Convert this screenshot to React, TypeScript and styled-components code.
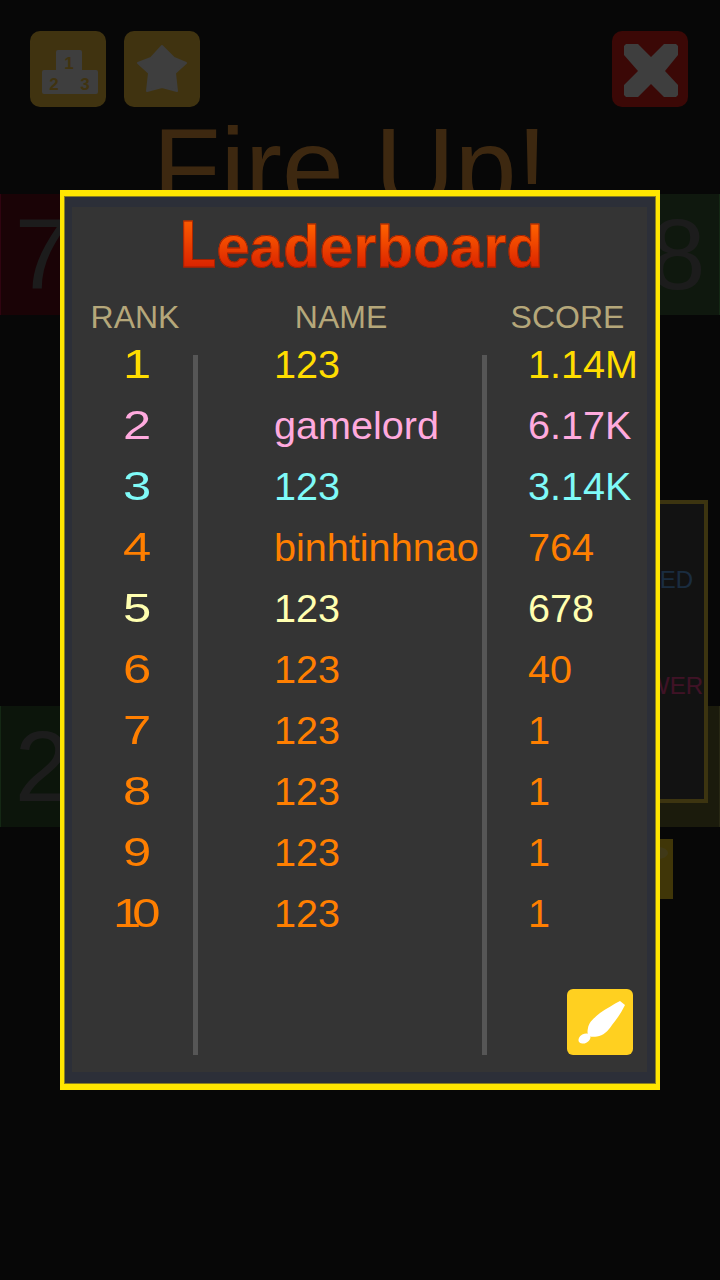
import styled, { createGlobalStyle } from 'styled-components'

const SANS = '"Liberation Sans", Arial, sans-serif'

const PLAYERS = [
  { rank: 1, name: '123', score: '1.14M', color: '#ffdd00' },
  { rank: 2, name: 'gamelord', score: '6.17K', color: '#ffaade' },
  { rank: 3, name: '123', score: '3.14K', color: '#7ffaf8' },
  { rank: 4, name: 'binhtinhnao', score: '764', color: '#ff7f00' },
  { rank: 5, name: '123', score: '678', color: '#ffffb0' },
  { rank: 6, name: '123', score: '40', color: '#ff7f00' },
  { rank: 7, name: '123', score: '1', color: '#ff7f00' },
  { rank: 8, name: '123', score: '1', color: '#ff7f00' },
  { rank: 9, name: '123', score: '1', color: '#ff7f00' },
  { rank: 10, name: '123', score: '1', color: '#ff7f00' },
]

const App = () => {
  return (
    <>
      <GlobalStyle />
      <Game>
        <TopBar>
          <IconButton $bg="#fdcb40">
            <svg width="76" height="76" viewBox="0 0 76 76">
              <path d="M28 19h22a2 2 0 0 1 2 2v18h14a2 2 0 0 1 2 2v20a2 2 0 0 1-2 2H14a2 2 0 0 1-2-2V41a2 2 0 0 1 2-2h12V21a2 2 0 0 1 2-2z" fill="#f5f5f5" />
              <PodiumText x="39" y="38" fontSize="17">1</PodiumText>
              <PodiumText x="24" y="59" fontSize="17">2</PodiumText>
              <PodiumText x="55" y="59" fontSize="17">3</PodiumText>
            </svg>
          </IconButton>
          <IconButton $bg="#fdcb40">
            <svg width="76" height="76" viewBox="0 0 76 76">
              <path
                d="M38 15 50 27 62 32 51 42 53 60 38 56 23 60 25 42 14 32 27 27Z"
                fill="#f5f5f5"
                stroke="#f5f5f5"
                strokeWidth="2"
                strokeLinejoin="round"
              />
            </svg>
          </IconButton>
          <IconButton $bg="#ea2018" $push>
            <svg width="76" height="76" viewBox="0 0 76 76">
              <path
                d="M14 13H26L39 26 52 13H64L66 15V24L53 40 66 54V64L64 66H52L39 53 26 66H14L12 64V54L26 40 12 24V15Z"
                fill="#f5f5f5"
              />
            </svg>
          </IconButton>
        </TopBar>
        <GameTitle>Fire Up!</GameTitle>
        <TileRow>
          <Tile $bg="#680c18" $edge="#c01040" $side="left">7</Tile>
          <Tile $bg="#3c6038" $edge="#50a050" $side="right">8</Tile>
        </TileRow>
        <Middle>
          <SidePanel>
            <PanelLabel $color="#68b0fc" $mr={11}>SPEED</PanelLabel>
            <PanelLabel $color="#ff4898" $mr={1}>POWER</PanelLabel>
          </SidePanel>
        </Middle>
        <TileRow>
          <Tile $bg="#30542c" $edge="#50a050" $side="left">2</Tile>
          <Tile $bg="#6c6c30" $edge="#a0a050" $side="right" />
        </TileRow>
        <BottomRow>
          <PlayButton />
        </BottomRow>
      </Game>
      <Backdrop />
      <ModalLayer>
        <Modal>
          <Content>
            <TitleRow>
              <BoardTitle>
                <TitleInitial>L</TitleInitial>eaderboard
              </BoardTitle>
            </TitleRow>
            <HeaderRow>
              <HeaderCell $pl={5}>RANK</HeaderCell>
              <HeaderCell $pl={2}>NAME</HeaderCell>
              <HeaderCell $pl={1}>SCORE</HeaderCell>
            </HeaderRow>
            <Body>
              <RankColumn>
                {PLAYERS.map((p) => (
                  <RankCell key={p.rank} $color={p.color}>
                    <RankNumber>{p.rank}</RankNumber>
                  </RankCell>
                ))}
              </RankColumn>
              <Divider />
              <NameColumn>
                {PLAYERS.map((p) => (
                  <Cell key={p.rank} $color={p.color}>
                    {p.name}
                  </Cell>
                ))}
              </NameColumn>
              <Divider />
              <ScoreColumn>
                {PLAYERS.map((p) => (
                  <Cell key={p.rank} $color={p.color}>
                    {p.score}
                  </Cell>
                ))}
                <EditButton>
                  <svg width="66" height="66" viewBox="0 0 66 66">
                    <path
                      d="M53 12 58 16C54 24 50 30 45 36 41 42 36 47 30 47.5 27 48 24 48 22.5 47 20.5 46 20 43 21 39 22 33 27 29 33 24 39 20 47 15 53 12Z"
                      fill="#fff"
                    />
                    <ellipse cx="17.5" cy="49.5" rx="6.5" ry="4.5" transform="rotate(-30 17.5 49.5)" fill="#fff" />
                  </svg>
                </EditButton>
              </ScoreColumn>
            </Body>
          </Content>
        </Modal>
      </ModalLayer>
    </>
  )
}

const GlobalStyle = createGlobalStyle`
  html, body {
    margin: 0;
    background: #000;
    font-family: ${SANS};
  }
`

const Game = styled.div`
  width: 720px;
  height: 1280px;
  display: flex;
  flex-direction: column;
  overflow: hidden;
  background: #1c1c1c;
`

const TopBar = styled.div`
  display: flex;
  gap: 18px;
  padding: 31px 32px 0 30px;
`

const IconButton = styled.div<{ $bg: string; $push?: boolean }>`
  width: 76px;
  height: 76px;
  border-radius: 10px;
  background: ${(p) => p.$bg};
  margin-left: ${(p) => (p.$push ? 'auto' : '0')};
`

const PodiumText = styled.text`
  fill: #fdcb40;
  font-family: ${SANS};
  font-weight: 700;
  text-anchor: middle;
`

const GameTitle = styled.div`
  height: 87px;
  padding-right: 20px;
  font-size: 111px;
  line-height: 123px;
  color: #f4a040;
  text-align: center;
  white-space: nowrap;
`

const TileRow = styled.div`
  display: flex;
  justify-content: space-between;
  height: 121px;
`

const Tile = styled.div<{ $bg: string; $edge: string; $side: 'left' | 'right' }>`
  width: 84px;
  box-sizing: border-box;
  background: ${(p) => p.$bg};
  border-${(p) => p.$side}: 1px solid ${(p) => p.$edge};
  color: #707070;
  font-size: 100px;
  line-height: 121px;
  text-align: center;
`

const Middle = styled.div`
  position: relative;
  height: 391px;
`

const SidePanel = styled.div`
  position: absolute;
  top: 185px;
  right: 12px;
  width: 200px;
  height: 303px;
  box-sizing: border-box;
  border: 4px solid #f0d040;
  background: #484848;
  padding-top: 62px;
  display: flex;
  flex-direction: column;
  gap: 78px;
`

const PanelLabel = styled.div<{ $color: string; $mr: number }>`
  font-size: 24px;
  line-height: 28px;
  text-align: right;
  color: ${(p) => p.$color};
  margin-right: ${(p) => p.$mr}px;
`

const BottomRow = styled.div`
  display: flex;
  justify-content: flex-end;
  padding: 12px 47px 0 0;
`

const PlayButton = styled.div`
  position: relative;
  width: 120px;
  height: 60px;
  background: #ffd820;

  &::after {
    content: '';
    position: absolute;
    top: 8px;
    right: 5px;
    width: 20px;
    height: 12px;
    border-radius: 50%;
    background: #fff0a0;
    opacity: 0.5;
  }
`

const Backdrop = styled.div`
  position: fixed;
  inset: 0;
  background: rgba(0, 0, 0, 0.75);
`

const ModalLayer = styled.div`
  position: fixed;
  inset: 0;
  display: flex;
  align-items: center;
  justify-content: center;
`

const Modal = styled.div`
  width: 600px;
  height: 900px;
  box-sizing: border-box;
  border-style: solid;
  border-color: #ffe600;
  border-width: 6px 4px;
  padding: 11px 9px 12px 8px;
  background: #2c2f38;
  box-shadow: inset 0 0 0 1px #8a8020;
`

const Content = styled.div`
  height: 100%;
  box-sizing: border-box;
  padding-bottom: 17px;
  display: flex;
  flex-direction: column;
  background: #343434;
`

const TitleRow = styled.div`
  height: 88px;
  display: flex;
  justify-content: center;
  padding: 0 0 0 4px;
`

const BoardTitle = styled.div`
  align-self: flex-start;
  margin-top: 2px;
  font-size: 60px;
  font-weight: 700;
  line-height: 76px;
  height: 76px;
  white-space: nowrap;
  background: linear-gradient(180deg, #ff6000 22%, #d82000 80%);
  background-clip: text;
  -webkit-background-clip: text;
  color: transparent;
  -webkit-text-stroke: 0.8px #a02000;
`

const TitleInitial = styled.span`
  display: inline-block;
  transform: scaleY(1.12);
  transform-origin: 50% 59px;
  background: linear-gradient(180deg, #ff6000 16%, #d82000 80%);
  background-clip: text;
  -webkit-background-clip: text;
`

const HeaderRow = styled.div`
  display: grid;
  grid-template-columns: 121px 294px 160px;
  height: 39px;
`

const HeaderCell = styled.div<{ $pl?: number }>`
  font-size: 32px;
  line-height: 44px;
  color: #b5a77a;
  text-align: center;
  padding-left: ${(p) => p.$pl ?? 0}px;
`

const Body = styled.div`
  flex: 1;
  display: grid;
  grid-template-columns: 121px 5px 284px 5px 160px;
`

const Divider = styled.div`
  margin-top: 21px;
  background: #565656;
`

const RankColumn = styled.div``

const NameColumn = styled.div`
  padding-left: 76px;
`

const ScoreColumn = styled.div`
  padding-left: 41px;
  display: flex;
  flex-direction: column;
`

const Cell = styled.div<{ $color: string }>`
  height: 61px;
  font-size: 39.6px;
  line-height: 60px;
  white-space: nowrap;
  color: ${(p) => p.$color};
`

const RankCell = styled(Cell)`
  text-align: center;
  font-size: 40px;
`

const RankNumber = styled.span`
  display: inline-block;
  letter-spacing: -7px;
  transform: scaleX(1.27);
`

const EditButton = styled.div`
  width: 66px;
  height: 66px;
  margin: auto 0 0 39px;
  border-radius: 6px;
  background: #ffd020;
`

export default App
